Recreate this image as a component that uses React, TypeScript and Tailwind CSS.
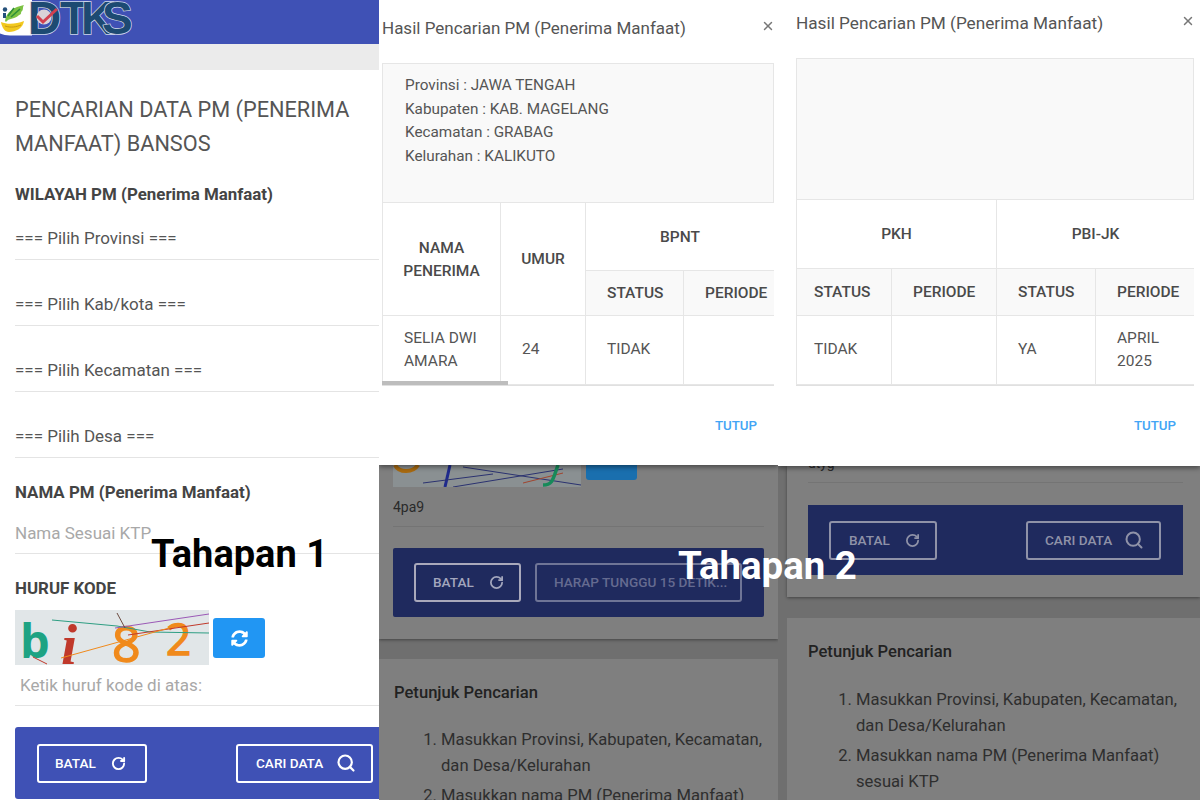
import { ReactNode } from 'react';
import { RotateCw, Search, X } from 'lucide-react';
import { FaSyncAlt } from 'react-icons/fa';

function Logo() {
  return (
    <svg width="136" height="37" viewBox="0 0 136 37">
      <path d="M-6 -4 H32 V35.5 H10 C2 35.5 -6 32 -6 26 Z" fill="#fff" />
      <path d="M5 21 C6 12 14 7 24 5 C22 8 24 10 21 12 C22 14 19 15 18 16 C14 19 9 18 6 22 Z" fill="#7cc243" />
      <path d="M8 16 L14 8 M11 17 L20 9" stroke="#2f8f3a" strokeWidth="1.6" />
      <circle cx="5" cy="9.5" r="2.2" fill="#24507a" />
      <rect x="3" y="13" width="3" height="5" fill="#24507a" />
      <path d="M1 22 C8 25 16 24 24 21 C23 28 16 32 9 32 C5 32 2 28 1 22 Z" fill="#f2c81e" />
      <path d="M5 26 C11 28 16 27 21 25" stroke="#c99a12" fill="none" />
      <text
        x="28 60 81 102"
        y="34"
        fontFamily="'Liberation Sans', Arial, sans-serif"
        fontWeight="700"
        fontSize="46"
        fill="#1d4a72"
        stroke="#cfd8ea"
        strokeWidth="1.5"
        paintOrder="stroke"
      >
        DTKS
      </text>
      <circle cx="44" cy="17" r="7.5" fill="#d9d3d8" />
      <path d="M37 16 L43 22 L57 9" fill="none" stroke="#d2404f" strokeWidth="3" />
    </svg>
  );
}

function Captcha() {
  return (
    <svg width="194" height="55" viewBox="0 0 194 55" className="shrink-0 overflow-hidden bg-[#e1e6e8]">
      <text x="5" y="48" fontFamily="'Open Sans', sans-serif" fontWeight="700" fontSize="47" fill="#1ea383">b</text>
      <text x="46" y="54" fontFamily="'Liberation Serif', serif" fontStyle="italic" fontWeight="700" fontSize="58" fill="#c0392b">i</text>
      <text x="97" y="52" fontFamily="'Open Sans', sans-serif" fontSize="50" fill="#f08a1c" stroke="#f08a1c" strokeWidth="1.5">8</text>
      <text x="151" y="45" fontFamily="'Open Sans', sans-serif" fontSize="44" fill="#f08a1c" stroke="#f08a1c" strokeWidth="1.5">2</text>
      <path d="M37 10 L102 16 L135 22 L194 23" stroke="#2e9e83" fill="none" />
      <path d="M100 18 L194 4" stroke="#9b59b6" fill="none" />
      <path d="M113 25 L194 13" stroke="#c0392b" fill="none" />
      <path d="M46 48 L165 15" stroke="#f08a1c" fill="none" />
      <path d="M102 3 L110 18" stroke="#6d4c41" fill="none" />
      <path d="M18 47 L32 54" stroke="#c0392b" fill="none" />
    </svg>
  );
}

function OutlineButton({ label, icon, className }: { label: string; icon?: ReactNode; className: string }) {
  return (
    <div className={`flex h-[39px] items-center rounded-[3px] border-2 text-[13.6px] font-medium ${className}`}>
      <span className="whitespace-nowrap">{label}</span>
      {icon}
    </div>
  );
}

interface ModalTableProps {
  widths: number[];
  rows: string[];
  head: ReactNode;
  sub: ReactNode;
  row: ReactNode;
}

function ModalTable({ widths, rows, head, sub, row }: ModalTableProps) {
  const total = widths.reduce((a, b) => a + b, 0);
  return (
    <table className="table-fixed border-collapse text-[15.5px] leading-[23.5px] text-[#555]" style={{ width: total }}>
      <colgroup>
        {widths.map((w, i) => (
          <col key={i} style={{ width: w }} />
        ))}
      </colgroup>
      <tbody>
        <tr className={rows[0]}>{head}</tr>
        <tr className={`bg-[#f9f9f9] ${rows[1]}`}>{sub}</tr>
        <tr className={rows[2]}>{row}</tr>
      </tbody>
    </table>
  );
}

const th = 'border border-[#e6e6e6] pt-[2px] text-center font-medium text-[#4a4a4a]';
const thLeft = 'border border-[#e6e6e6] pt-[2px] pl-[21px] text-left font-medium text-[#4a4a4a] whitespace-nowrap';
const thFirst = 'border border-[#e6e6e6] pt-[2px] pl-[17px] text-left font-medium text-[#4a4a4a] whitespace-nowrap';
const td = 'border border-[#e6e6e6] pl-[21px] font-normal';
const tdFirst = 'border border-[#e6e6e6] pl-[17px] font-normal';
const tdName = 'border border-[#e6e6e6] pl-[21px] font-normal';

function Guide({ className, listClass }: { className: string; listClass: string }) {
  return (
    <div className={`bg-[#7f7f7f] text-[16.6px] text-[#2e2e2e] ${className}`}>
      <div className="h-6 leading-6 font-medium text-[#222]">Petunjuk Pencarian</div>
      <ol className={`flex list-decimal flex-col gap-[4px] leading-[26px] ${listClass}`}>
        <li>Masukkan Provinsi, Kabupaten, Kecamatan, dan Desa/Kelurahan</li>
        <li>Masukkan nama PM (Penerima Manfaat) sesuai KTP</li>
      </ol>
    </div>
  );
}

export default function App() {
  return (
    <div
      className="relative flex h-[800px] w-[1200px] overflow-hidden bg-white"
      style={{ fontFamily: 'Roboto, sans-serif' }}
    >
      {/* Tahapan 1 */}
      <div className="flex h-[800px] w-[379px] shrink-0 flex-col bg-white text-[#555]">
        <div className="h-[44px] overflow-hidden bg-[#3f51b5] shadow-[0_1px_2px_rgba(0,0,0,0.35)]">
          <Logo />
        </div>
        <div className="h-[26px] bg-[#ebebeb]" />
        <div className="pl-[15px]">
          <h1 className="mt-[23px] text-[21.7px] leading-[34px] text-[#555]">
            PENCARIAN DATA PM (PENERIMA
            <br />
            MANFAAT) BANSOS
          </h1>
          <div className="mt-[21px] h-6 text-[16.9px] leading-6 font-bold text-[#444]">WILAYAH PM (Penerima Manfaat)</div>
          <div className="mt-[9px] flex flex-col gap-[21px] text-[17px]">
            <div className="flex h-[45px] items-center border-b border-[#e4e4e4] pt-[3px]">=== Pilih Provinsi ===</div>
            <div className="flex h-[45px] items-center border-b border-[#e4e4e4] pt-[3px]">=== Pilih Kab/kota ===</div>
            <div className="flex h-[45px] items-center border-b border-[#e4e4e4] pt-[3px]">=== Pilih Kecamatan ===</div>
            <div className="flex h-[45px] items-center border-b border-[#e4e4e4] pt-[3px]">=== Pilih Desa ===</div>
          </div>
          <div className="mt-[22px] h-6 text-[16.9px] leading-6 font-bold text-[#444]">NAMA PM (Penerima Manfaat)</div>
          <div className="mt-[9px] flex h-[41px] items-center border-b border-[#e4e4e4] pt-[2px] text-[17px] text-[#a8a8a8]">
            Nama Sesuai KTP
          </div>
          <div className="mt-[22px] h-6 text-[16.9px] leading-6 font-bold text-[#444]">HURUF KODE</div>
          <div className="mt-[10px] flex h-[55px] items-start gap-[4px]">
            <Captcha />
            <div className="mt-[8px] flex h-[40px] w-[52px] items-center justify-center rounded-[3px] bg-[#2196f3] text-white">
              <FaSyncAlt size={17} />
            </div>
          </div>
          <div className="flex h-[41px] items-center border-b border-[#e4e4e4] pt-[2px] pl-[5px] text-[17px] text-[#a8a8a8]">
            Ketik huruf kode di atas:
          </div>
          <div className="mt-[21px] flex h-[72px] items-center justify-between rounded-l-[3px] bg-[#3f51b5] pr-[6px] pl-[22px]">
            <OutlineButton
              label="BATAL"
              className="w-[110px] border-white pl-[16px] text-white"
              icon={<RotateCw size={15} strokeWidth={3} className="ml-[15px]" />}
            />
            <OutlineButton
              label="CARI DATA"
              className="w-[137px] border-white pl-[18px] text-white"
              icon={<Search size={20} strokeWidth={2.6} className="ml-[13px]" />}
            />
          </div>
        </div>
      </div>

      {/* Tahapan 2, tabel bagian kiri */}
      <div className="flex h-[800px] w-[399px] shrink-0 flex-col overflow-hidden bg-[#6f6f6f]">
        <div className="relative z-10 h-[465px] shrink-0 bg-white pl-[3px] shadow-[0_2px_5px_rgba(0,0,0,0.45)]">
          <div className="flex h-[63px] items-center justify-between pr-[3px] pb-[5px] text-[17px] text-[#555]">
            <span>Hasil Pencarian PM (Penerima Manfaat)</span>
            <X size={14} strokeWidth={2.5} className="mb-[6px] text-[#777]" />
          </div>
          <div className="h-[139px] w-[392px] border border-b-0 border-[#e6e6e6] bg-[#f9f9f9] pt-[10px] pl-[22px] text-[15.3px] leading-[23.5px] text-[#555]">
            <div>Provinsi : JAWA TENGAH</div>
            <div>Kabupaten : KAB. MAGELANG</div>
            <div>Kecamatan : GRABAG</div>
            <div>Kelurahan : KALIKUTO</div>
          </div>
          <div className="relative w-[392px] overflow-hidden border-b border-[#e0e0e0]">
            <ModalTable
              widths={[118, 85, 98, 91]}
              rows={['h-[68px]', 'h-[45px]', 'h-[69px]']}
              head={
                <>
                  <th rowSpan={2} className={th}>NAMA<br />PENERIMA</th>
                  <th rowSpan={2} className={th}>UMUR</th>
                  <th colSpan={2} className={th}>BPNT</th>
                </>
              }
              sub={
                <>
                  <th className={thLeft}>STATUS</th>
                  <th className={thLeft}>PERIODE</th>
                </>
              }
              row={
                <>
                  <td className={tdName}>SELIA DWI AMARA</td>
                  <td className={td}>24</td>
                  <td className={td}>TIDAK</td>
                  <td className={td} />
                </>
              }
            />
            <div className="absolute bottom-0 left-0 h-[4px] w-[126px] bg-[#bdbdbd]" />
          </div>
          <div className="mt-[30px] pr-[21px] text-right text-[13.3px] font-medium text-[#42a5f5]">TUTUP</div>
        </div>

        <div className="bg-[#7f7f7f] px-[14px] pb-[22px] shadow-[0_1px_3px_rgba(0,0,0,0.4)]">
          <div className="flex h-[22px] items-start gap-[5px]">
            <svg width="188" height="22" viewBox="0 0 188 22" className="bg-[#8a9092]">
              <path d="M2 0 C6 8 20 8 25 0" fill="none" stroke="#a86a10" strokeWidth="4" />
              <path d="M57 0 L52 22" stroke="#1f2a8c" strokeWidth="3" />
              <path d="M30 18 L100 9 M60 22 L170 4 M70 2 L188 20" stroke="#2b3270" fill="none" />
              <path d="M130 18 L170 8" stroke="#a0452f" fill="none" />
              <path d="M165 0 C160 14 160 20 150 20" fill="none" stroke="#178a5a" strokeWidth="3.5" />
            </svg>
            <div className="h-[15px] w-[51px] rounded-b-[3px] bg-[#1a6fae]" />
          </div>
          <div className="flex h-[40px] items-center border-b border-[#747474] pt-[1px] text-[14px] text-[#2a2a2a]">4pa9</div>
          <div className="mt-[21px] flex h-[69px] items-center gap-[14px] rounded-[2px] bg-[#1f2a5e] pl-[21px]">
            <OutlineButton
              label="BATAL"
              className="w-[107px] border-[#a9a9bb] pl-[17px] text-[#a3a6bd]"
              icon={<RotateCw size={15} strokeWidth={2.8} className="ml-[15px]" />}
            />
            <OutlineButton
              label="HARAP TUNGGU 15 DETIK..."
              className="w-[207px] border-[#6f7596] pl-[17px] text-[#656b90]"
            />
          </div>
        </div>
        <Guide className="mt-[20px] flex-1 pt-[22px] pl-[15px]" listClass="mt-[22px] pr-[15px] pl-[47px]" />
      </div>

      {/* Tahapan 2, tabel bagian kanan */}
      <div className="flex h-[800px] w-[422px] shrink-0 flex-col overflow-hidden bg-[#6f6f6f]">
        <div className="relative z-10 h-[466px] shrink-0 bg-white pl-[18px] shadow-[0_2px_5px_rgba(0,0,0,0.45)]">
          <div className="flex h-[58px] items-center justify-between pr-[5px] pb-[10px] text-[17.2px] text-[#555]">
            <span>Hasil Pencarian PM (Penerima Manfaat)</span>
            <X size={14} strokeWidth={2.5} className="mb-[6px] text-[#777]" />
          </div>
          <div className="h-[141px] w-[398px] border border-b-0 border-[#e6e6e6] bg-[#f9f9f9]" />
          <div className="w-[398px] overflow-hidden border-b border-[#e0e0e0]">
            <ModalTable
              widths={[95, 105, 99, 99]}
              rows={['h-[69px]', 'h-[47px]', 'h-[69px]']}
              head={
                <>
                  <th colSpan={2} className={th}>PKH</th>
                  <th colSpan={2} className={th}>PBI-JK</th>
                </>
              }
              sub={
                <>
                  <th className={thFirst}>STATUS</th>
                  <th className={thLeft}>PERIODE</th>
                  <th className={thLeft}>STATUS</th>
                  <th className={thLeft}>PERIODE</th>
                </>
              }
              row={
                <>
                  <td className={tdFirst}>TIDAK</td>
                  <td className={td} />
                  <td className={td}>YA</td>
                  <td className={td}>APRIL 2025</td>
                </>
              }
            />
          </div>
          <div className="mt-[30px] pr-[24px] text-right text-[13.3px] font-medium text-[#42a5f5]">TUTUP</div>
        </div>

        <div className="ml-[9px] bg-[#7f7f7f] pr-[17px] pb-[22px] pl-[21px] shadow-[0_1px_3px_rgba(0,0,0,0.4)]">
          <div className="h-[17px] overflow-hidden border-b border-[#747474] text-[14px] leading-[14px] text-[#2a2a2a]">
            <div className="-mt-[10px]">utyg</div>
          </div>
          <div className="mt-[22px] flex h-[70px] items-center justify-between bg-[#1f2a5e] pr-[22px] pl-[21px]">
            <OutlineButton
              label="BATAL"
              className="w-[108px] border-[#8f92a8] pl-[18px] text-[#8f92a8]"
              icon={<RotateCw size={15} strokeWidth={2.8} className="ml-[15px]" />}
            />
            <OutlineButton
              label="CARI DATA"
              className="w-[135px] border-[#8f92a8] pl-[17px] text-[#8f92a8]"
              icon={<Search size={20} strokeWidth={2.4} className="ml-[12px]" />}
            />
          </div>
        </div>
        <Guide className="mt-[21px] ml-[9px] flex-1 pt-[22px] pl-[21px]" listClass="mt-[23px] pr-[15px] pl-[48px]" />
      </div>

      <div className="absolute top-[531px] left-[151px] z-20 text-[38px] leading-[46px] font-bold text-black">Tahapan 1</div>
      <div className="absolute top-[543px] left-[678px] z-20 text-[38.4px] leading-[46px] font-bold text-white">Tahapan 2</div>
    </div>
  );
}
